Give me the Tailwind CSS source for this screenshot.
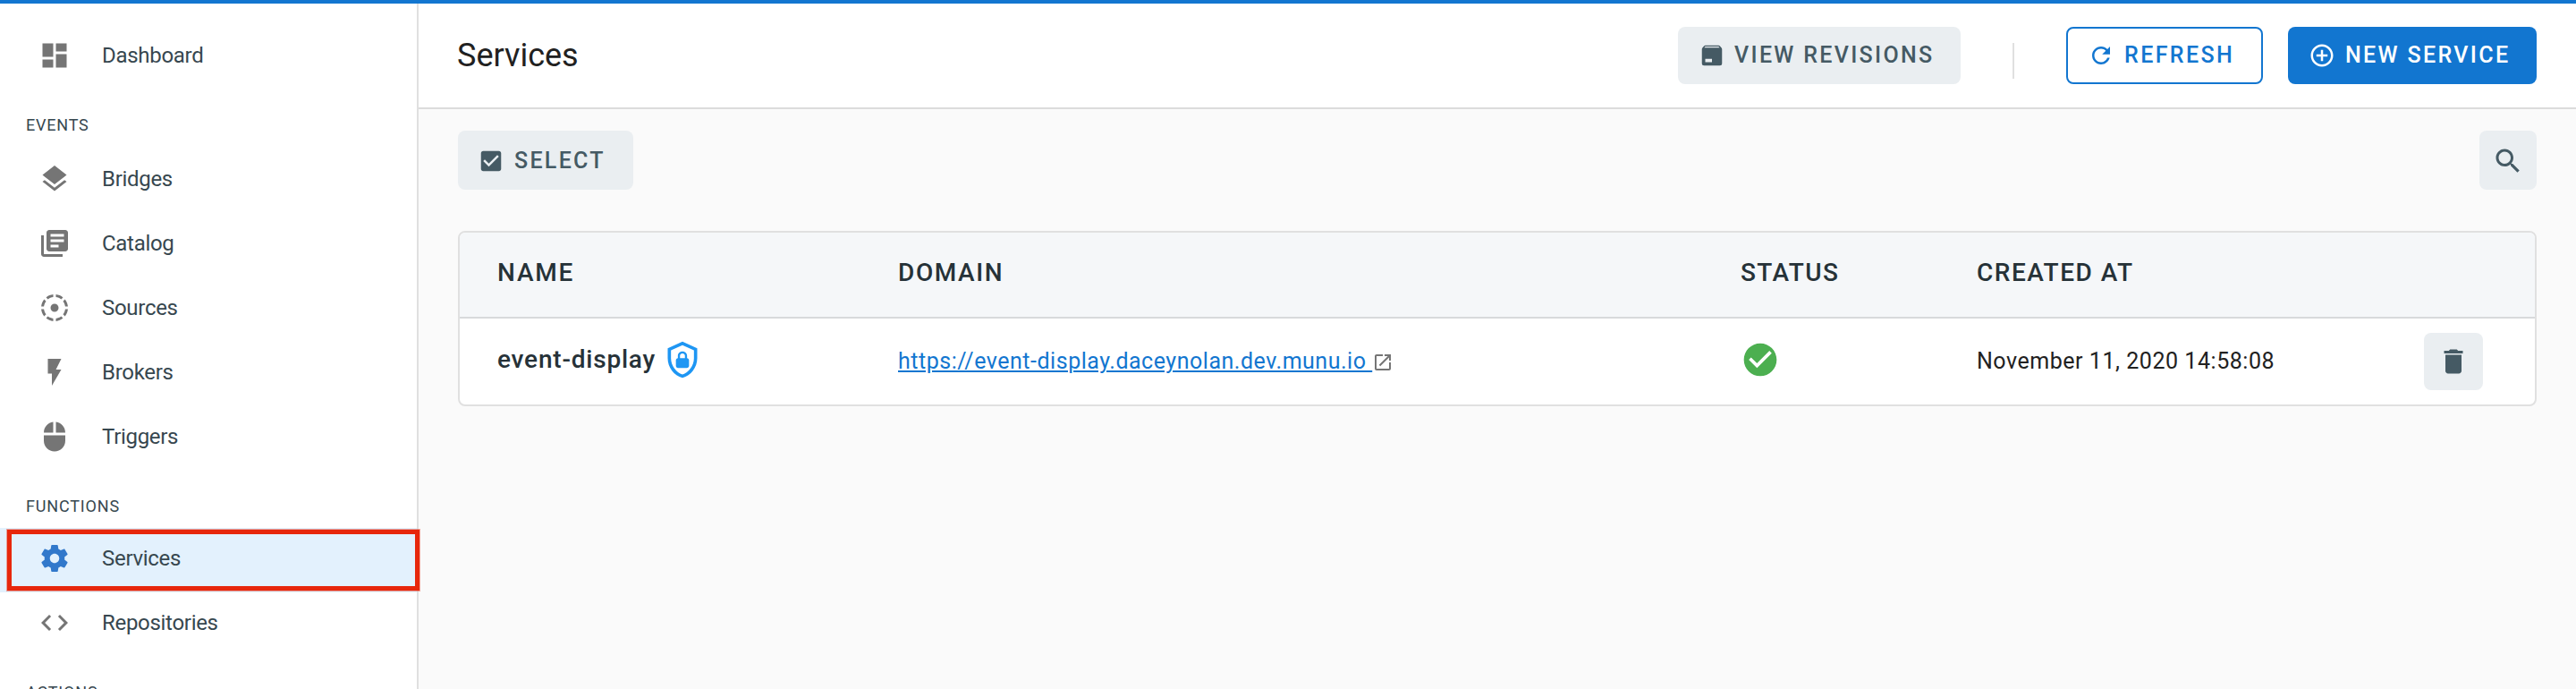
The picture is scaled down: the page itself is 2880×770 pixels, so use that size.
<!DOCTYPE html>
<html lang="en">
<head>
<meta charset="utf-8">
<title>Services</title>
<script src="https://cdn.jsdelivr.net/npm/@tailwindcss/browser@4"></script>
</head>
<body class="relative h-[770px] w-[2880px] overflow-hidden bg-[#fafafa] font-['Roboto',sans-serif] text-[#212121]">
<div class="flex h-[770px] flex-col">
  <div class="h-1 shrink-0 bg-[#1276d0]"></div>
  <div class="flex min-h-0 flex-1">

    <!-- Sidebar -->
    <nav class="w-[468px] shrink-0 overflow-hidden border-r-2 border-[#e0e0e0] bg-white pt-[22px] text-2xl leading-7 tracking-[-0.3px] text-[#37474f]">
      <a class="flex h-[72px] items-center gap-[35px] pl-[43px]">
        <svg class="size-9 fill-[#757575]" viewBox="0 0 24 24"><path d="M3 13h8V3H3v10zm0 8h8v-6H3v6zm10 0h8V11h-8v10zm0-18v6h8V3h-8z"/></svg>
        <span>Dashboard</span>
      </a>
      <h2 class="h-[66px] pt-[31px] pl-[29px] text-lg leading-[21px] tracking-[0.8px]">EVENTS</h2>
      <a class="flex h-[72px] items-center gap-[35px] pl-[43px]">
        <svg class="size-9 fill-[#757575]" viewBox="0 0 24 24"><path d="M11.99 18.54l-7.37-5.73L3 14.07l9 7 9-7-1.63-1.27-7.38 5.74zM12 16l7.36-5.73L21 9l-9-7-9 7 1.63 1.27L12 16z"/></svg>
        <span>Bridges</span>
      </a>
      <a class="flex h-[72px] items-center gap-[35px] pl-[43px]">
        <svg class="size-9 fill-[#757575]" viewBox="0 0 24 24"><path d="M4 6H2v14c0 1.100.9 2 2 2h14v-2H4V6zm16-4H8c-1.100 0-2 .9-2 2v12c0 1.100.9 2 2 2h12c1.100 0 2-.9 2-2V4c0-1.100-.9-2-2-2zm-1 9H9V9h10v2zm-4 4H9v-2h6v2zm4-8H9V5h10v2z"/></svg>
        <span>Catalog</span>
      </a>
      <a class="flex h-[72px] items-center gap-[35px] pl-[43px]">
        <svg class="size-9 fill-[#757575]" viewBox="0 0 24 24"><path d="M11 4.070V2.050c-2.010.2-3.840 1-5.320 2.210L7.100 5.690c1.110-.86 2.440-1.440 3.900-1.620zm7.320.19C16.840 3.050 15.010 2.250 13 2.050v2.020c1.460.18 2.790.76 3.900 1.620l1.420-1.430zM19.930 11h2.020c-.2-2.010-1-3.840-2.210-5.320L18.310 7.100c.86 1.110 1.440 2.440 1.620 3.900zM5.690 7.100L4.260 5.680C3.050 7.160 2.250 8.990 2.050 11h2.020c.18-1.460.76-2.790 1.620-3.900zM4.070 13H2.050c.2 2.010 1 3.840 2.210 5.320l1.430-1.430c-.86-1.100-1.440-2.430-1.620-3.890zM15 12c0-1.660-1.340-3-3-3s-3 1.340-3 3 1.340 3 3 3 3-1.340 3-3zm3.310 4.900l1.430 1.430c1.210-1.480 2.010-3.320 2.210-5.320h-2.020c-.18 1.450-.76 2.780-1.620 3.890zM13 19.930v2.020c2.010-.2 3.840-1 5.320-2.210l-1.430-1.430c-1.100.86-2.430 1.440-3.890 1.620zm-7.320-.19C7.160 20.950 9 21.750 11 21.950v-2.020c-1.460-.18-2.790-.76-3.900-1.620l-1.420 1.430z"/></svg>
        <span>Sources</span>
      </a>
      <a class="flex h-[72px] items-center gap-[35px] pl-[43px]">
        <svg class="size-9 fill-[#757575]" viewBox="0 0 24 24"><path d="M7 2v11h3v9l7-12h-4l4-8z"/></svg>
        <span>Brokers</span>
      </a>
      <a class="flex h-[72px] items-center gap-[35px] pl-[43px]">
        <svg class="size-9 fill-[#757575]" viewBox="0 0 24 24"><path d="M13 1.070V9h7c0-4.080-3.050-7.440-7-7.930zM4 15c0 4.420 3.580 8 8 8s8-3.580 8-8v-4H4v4zm7-13.930C7.050 1.560 4 4.920 4 9h7V1.070z"/></svg>
        <span>Triggers</span>
      </a>
      <h2 class="h-[66px] pt-[31px] pl-[29px] text-lg leading-[21px] tracking-[0.84px]">FUNCTIONS</h2>
      <a class="flex h-[72px] items-center gap-[35px] bg-[#e3f1fd] pb-1 pl-[43px]">
        <svg class="size-9 fill-[#3178cb]" viewBox="0 0 24 24"><path d="M19.430 12.980c.04-.32.07-.64.07-.98s-.03-.66-.07-.98l2.110-1.650c.19-.15.24-.42.12-.64l-2-3.460c-.12-.22-.39-.3-.61-.22l-2.490 1c-.52-.4-1.080-.73-1.690-.98l-.38-2.650C14.460 2.180 14.250 2 14 2h-4c-.25 0-.46.18-.49.42l-.38 2.650c-.61.25-1.170.59-1.690.98l-2.490-1c-.23-.09-.49 0-.61.22l-2 3.460c-.13.22-.07.49.12.64l2.110 1.650c-.04.32-.07.65-.07.98s.03.66.07.98l-2.110 1.650c-.19.15-.24.42-.12.64l2 3.460c.12.22.39.3.61.22l2.490-1c.52.4 1.080.73 1.690.98l.38 2.650c.03.24.24.42.49.42h4c.25 0 .46-.18.49-.42l.38-2.650c.61-.25 1.170-.59 1.690-.98l2.490 1c.23.09.49 0 .61-.22l2-3.460c.12-.22.07-.49-.12-.64l-2.110-1.650zM12 15.500c-1.930 0-3.500-1.570-3.500-3.500s1.570-3.500 3.500-3.500 3.500 1.570 3.500 3.500-1.570 3.500-3.500 3.500z"/></svg>
        <span>Services</span>
      </a>
      <a class="flex h-[72px] items-center gap-[35px] pb-1 pl-[43px]">
        <svg class="size-9 fill-[#757575]" viewBox="0 0 24 24"><path d="M9.400 16.600L4.800 12l4.600-4.600L8 6l-6 6 6 6 1.400-1.400zm5.200 0l4.600-4.600-4.600-4.600L16 6l6 6-6 6-1.400-1.400z"/></svg>
        <span>Repositories</span>
      </a>
      <h2 class="h-[66px] pt-[29px] pl-[29px] text-lg leading-[21px] tracking-[0.84px]">ACTIONS</h2>
    </nav>

    <main class="flex min-w-0 flex-1 flex-col">
      <!-- Page header -->
      <header class="flex h-[118px] items-center border-b-2 border-[#dcdcdc] bg-white pr-11 pl-[43px]">
        <h1 class="mr-auto text-4xl leading-[42px]">Services</h1>
        <button class="flex h-16 w-[316px] items-center gap-2.5 rounded-lg bg-[#eaeef1] pl-[23px] text-[25px] font-medium tracking-[2.33px] text-[#455a64]">
          <svg class="size-[30px] shrink-0 fill-[#455a64]" viewBox="0 0 24 24"><path fill-rule="evenodd" d="M5.120 5L5.930 4H17.930L18.870 5ZM20.540 5.230L19.150 3.550C18.880 3.210 18.470 3 18 3H6C5.530 3 5.120 3.210 4.840 3.550L3.460 5.230C3.170 5.570 3 6 3 6.500V19A2 2 0 0 0 5 21H19A2 2 0 0 0 21 19V6.500C21 6 20.830 5.570 20.540 5.230ZM6 18H12V15H6V18Z"/></svg>
          <span class="mb-px leading-[30px] whitespace-nowrap">VIEW REVISIONS</span>
        </button>
        <div class="mt-3 mr-[58px] ml-[58px] h-10 w-0.5 bg-[#e0e0e0]"></div>
        <button class="mr-7 flex h-16 w-[220px] items-center gap-[11px] rounded-lg border-2 border-[#1276d0] pl-[22px] text-[25px] font-medium tracking-[2.4px] text-[#1276d0]">
          <svg class="size-[30px] shrink-0 fill-[#1276d0]" viewBox="0 0 24 24"><path d="M17.650 6.350C16.200 4.900 14.210 4 12 4c-4.420 0-7.990 3.580-7.990 8s3.570 8 7.990 8c3.730 0 6.840-2.550 7.730-6h-2.080c-.82 2.330-3.040 4-5.650 4-3.310 0-6-2.690-6-6s2.690-6 6-6c1.660 0 3.140.69 4.220 1.780L13 11h7V4l-2.350 2.350z"/></svg>
          <span class="mb-px leading-[30px] whitespace-nowrap">REFRESH</span>
        </button>
        <button class="flex h-16 w-[278px] items-center gap-[11px] rounded-lg bg-[#1276d0] pl-[23px] text-[25px] font-medium tracking-[2.36px] text-white">
          <svg class="size-[30px] shrink-0 fill-white" viewBox="0 0 24 24"><path d="M13 7h-2v4H7v2h4v4h2v-4h4v-2h-4V7zm-1-5C6.480 2 2 6.480 2 12s4.480 10 10 10 10-4.480 10-10S17.520 2 12 2zm0 18c-4.410 0-8-3.590-8-8s3.590-8 8-8 8 3.590 8 8-3.590 8-8 8z"/></svg>
          <span class="mb-px leading-[30px] whitespace-nowrap">NEW SERVICE</span>
        </button>
      </header>

      <section class="px-11 pt-6">
        <!-- Toolbar -->
        <div class="flex justify-between">
          <button class="flex h-[66px] w-[196px] items-center gap-[11px] rounded-lg bg-[#eaeef1] pt-px pl-[22px] text-[25px] font-medium tracking-[2.3px] text-[#455a64]">
            <svg class="size-[30px] shrink-0 fill-[#455a64]" viewBox="0 0 24 24"><path d="M19 3H5c-1.110 0-2 .9-2 2v14c0 1.100.89 2 2 2h14c1.110 0 2-.9 2-2V5c0-1.100-.89-2-2-2zm-9 14l-5-5 1.410-1.410L10 14.170l7.590-7.590L19 8l-9 9z"/></svg>
            <span class="leading-[30px]">SELECT</span>
          </button>
          <button class="flex h-[66px] w-16 items-center justify-center rounded-lg bg-[#eaeef1] pt-0.5">
            <svg class="size-9 fill-[#455a64]" viewBox="0 0 24 24"><path d="M15.500 14h-.79l-.28-.27C15.410 12.590 16 11.110 16 9.500 16 5.910 13.090 3 9.500 3S3 5.910 3 9.500 5.910 16 9.500 16c1.610 0 3.090-.59 4.230-1.570l.27.28v.79l5 4.990L20.490 19l-4.990-5zm-6 0C7.010 14 5 11.990 5 9.500S7.010 5 9.500 5 14 7.010 14 9.500 11.990 14 9.500 14z"/></svg>
          </button>
        </div>

        <!-- Services table -->
        <div class="mt-[46px] overflow-hidden rounded-lg border-2 border-[#e0e0e0] bg-white">
          <div class="grid h-24 grid-cols-[448px_942px_264px_500px_1fr] border-b-2 border-[#d8dadc] bg-[#f5f7f9] pt-7 pl-[42px] text-[28px] leading-[33px] font-medium text-[#263238]">
            <div class="tracking-[1.8px]">NAME</div>
            <div class="tracking-[1.6px]">DOMAIN</div>
            <div class="tracking-[1.4px]">STATUS</div>
            <div class="tracking-[1.5px]">CREATED AT</div>
          </div>
          <div class="grid h-24 grid-cols-[448px_942px_264px_500px_1fr] items-start pl-[42px] text-[25px] leading-[29px]">
            <div class="flex items-start gap-2 pt-6">
              <span class="mt-[5px] text-[28px] leading-[33px] font-medium tracking-[0.79px] text-[#263238]">event-display</span>
              <svg class="size-11 fill-[#1e96f3]" viewBox="0 0 24 24"><path d="M21 11C21 16.550 17.160 21.740 12 23C6.840 21.740 3 16.550 3 11V5L12 1L21 5V11M12 21C15.750 20 19 15.540 19 11.220V6.300L12 3.180L5 6.300V11.220C5 15.540 8.250 20 12 21M14.800 11V9.500C14.800 8.100 13.400 7 12 7C10.600 7 9.200 8.100 9.200 9.500V11C8.600 11 8 11.600 8 12.200V15.700C8 16.400 8.600 17 9.200 17H14.700C15.400 17 16 16.400 16 15.800V12.300C16 11.600 15.400 11 14.800 11M13.500 11H10.500V9.500C10.500 8.700 11.200 8.200 12 8.200C12.800 8.200 13.500 8.700 13.500 9.500V11Z"/></svg>
            </div>
            <div class="flex items-start pt-[33px]">
              <a class="tracking-[0.52px] text-[#1276d0] underline decoration-2 underline-offset-2">https://event-display.daceynolan.dev.munu.io&nbsp;</a>
              <svg class="mt-1 size-6 fill-[#757575]" viewBox="0 0 24 24"><path d="M19 19H5V5h7V3H5c-1.110 0-2 .9-2 2v14c0 1.100.89 2 2 2h14c1.100 0 2-.9 2-2v-7h-2v7zM14 3v2h3.590l-9.830 9.830 1.410 1.410L19 6.410V10h2V3h-7z"/></svg>
            </div>
            <div class="pt-6">
              <svg class="size-11 fill-[#4caf50]" viewBox="0 0 24 24"><path d="M12 2C6.480 2 2 6.480 2 12s4.480 10 10 10 10-4.480 10-10S17.520 2 12 2zm-2 15l-5-5 1.410-1.410L10 14.170l7.590-7.590L19 8l-9 9z"/></svg>
            </div>
            <div class="pt-[33px] tracking-[0.54px]">November 11, 2020 14:58:08</div>
            <div class="pt-4">
              <button class="flex h-16 w-[66px] items-center justify-center rounded-lg bg-[#eaeef1]">
                <svg class="size-9 fill-[#455a64]" viewBox="0 0 24 24"><path d="M6 19c0 1.100.9 2 2 2h8c1.100 0 2-.9 2-2V7H6v12zM19 4h-3.500l-1-1h-5l-1 1H5v2h14V4z"/></svg>
              </button>
            </div>
          </div>
        </div>
      </section>
    </main>
  </div>
</div>

<!-- Highlight frame over the active item -->
<div class="absolute top-[592px] left-2 h-[68px] w-[461px] border-[5px] border-[#e7270c] shadow-[0_0_0_1px_#e7270c66]"></div>
</body>
</html>
